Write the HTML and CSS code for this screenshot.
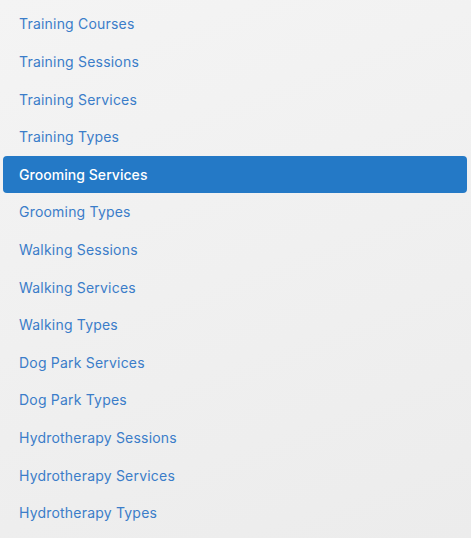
FILE: index.html
```html
<!DOCTYPE html>
<html>
<head>
<meta charset="utf-8">
<link rel="stylesheet" href="styles.css">
</head>
<body>
<nav class="menu">
  <a class="item">Training Courses</a>
  <a class="item">Training Sessions</a>
  <a class="item">Training Services</a>
  <a class="item">Training Types</a>
  <a class="item active">Grooming Services</a>
  <a class="item">Grooming Types</a>
  <a class="item">Walking Sessions</a>
  <a class="item">Walking Services</a>
  <a class="item">Walking Types</a>
  <a class="item">Dog Park Services</a>
  <a class="item">Dog Park Types</a>
  <a class="item">Hydrotherapy Sessions</a>
  <a class="item">Hydrotherapy Services</a>
  <a class="item">Hydrotherapy Types</a>
</nav>
</body>
</html>
```
FILE: styles.css
```css
html, body {
  margin: 0;
  height: 100%;
}
body {
  background: linear-gradient(160deg, #f4f4f4 0%, #ececec 100%);
  font-family: Inter, "Noto Sans", sans-serif;
}
.menu {
  display: flex;
  flex-direction: column;
  padding: 5.2px 4px 0 3px;
}
.item {
  display: flex;
  align-items: center;
  height: 37.6px;
  padding-left: 16px;
  font-size: 14px;
  letter-spacing: 0.2px;
  color: #3b7dc9;
  border-radius: 4px;
}
.active {
  background: #2479c6;
  color: #ffffff;
  font-weight: 500;
  letter-spacing: 0.05px;
}
```
